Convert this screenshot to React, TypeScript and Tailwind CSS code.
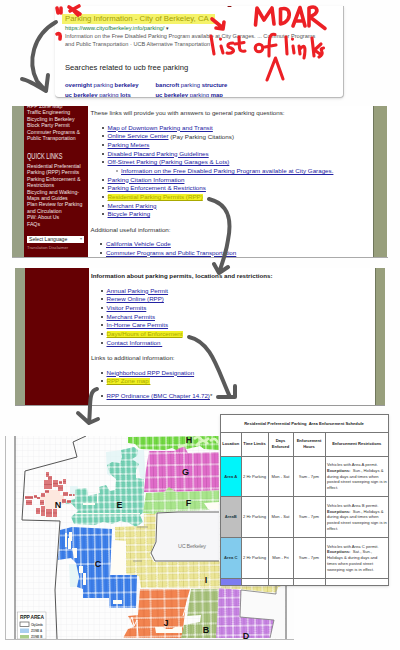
import React from "react";

const sans = "font-['Liberation_Sans',sans-serif]";

function Row({ children, hl = false, plain = "" }: { children: React.ReactNode; hl?: boolean; plain?: string }) {
  return (
    <li className="flex h-[8.7px] items-center whitespace-nowrap">
      <span className="mr-[4px] size-[2px] rounded-full bg-[#222]" />
      <span
        className={
          hl
            ? "bg-[#f0f024] leading-[6px] text-[#aaa900] underline decoration-[0.6px] underline-offset-[0.5px]"
            : "leading-[6px] text-[#2323a3] underline decoration-[0.6px] underline-offset-[0.5px]"
        }
      >
        {children}
      </span>
      {plain && <span className="whitespace-pre text-[#333]">{plain}</span>}
    </li>
  );
}

function SearchPanel() {
  return (
    <section className="ml-[55px] h-[92px] w-[289px] overflow-hidden rounded-b-sm border-b border-r border-[#bbb] bg-white pl-[10px] pt-[8px] shadow-sm">
      <div className="-ml-[3px] w-[153px] whitespace-nowrap bg-[#f5f36a] pl-[3px] text-[7.8px] leading-[10px] text-[#a4a006]">
        Parking Information - City of Berkeley, CA
      </div>
      <div className="mt-px h-[7px] whitespace-nowrap text-[5.8px] leading-[7px] text-[#187c43]">
        https://www.cityofberkeley.info/parking/ <span className="text-[5px] text-[#333]">▾</span>
      </div>
      <div className="whitespace-nowrap text-[5.6px] leading-[8px] text-[#555]">
        Information on the Free Disabled Parking Program available at City Garages. ... Commuter Programs
        <br />
        and Public Transportation · UCB Alternative Transportation
      </div>
      <h2 className="mt-[14px] text-[7.65px] leading-[11px] text-[#222]">Searches related to ucb free parking</h2>
      <div className="mt-[7px] grid grid-cols-[90.5px_1fr] whitespace-nowrap text-[5.92px] leading-[10.4px] text-[#222196]">
        <span><b>overnight</b> parking <b>berkeley</b></span>
        <span><b>bancroft</b> parking <b>structure</b></span>
        <span><b>uc berkeley</b> parking <b>lots</b></span>
        <span><b>uc berkeley</b> parking <b>map</b></span>
      </div>
    </section>
  );
}

function LinksPanel() {
  return (
    <section className="ml-[12px] mt-[8px] flex h-[152px] w-[376px] overflow-hidden border-b border-[#aaa] bg-white">
      <div className="w-[12px] bg-[#98a085]" />
      <aside className="w-[64px] overflow-hidden whitespace-nowrap bg-[#650003] pl-[3px] text-[5.2px] leading-[6.4px] text-[#f0e4e4]">
        <div className="-mt-[3px]">
          RPP Zone Map<br />Traffic Engineering<br />Bicycling in Berkeley<br />Block Party Permit<br />Commuter Programs &amp;<br />Public Transportation
        </div>
        <div className="mt-[10px] origin-left scale-x-[.66] text-[8.5px] leading-[10px]">QUICK LINKS</div>
        <div className="mt-[1.5px]">
          Residential Preferential<br />Parking (RPP) Permits<br />Parking Enforcement &amp;<br />Restrictions<br />Bicycling and Walking-<br />Maps and Guides<br />Plan Review for Parking<br />and Circulation<br />PW: About Us<br />FAQs
        </div>
        <div className="mt-[9px] flex h-[7px] w-[57px] items-center justify-between bg-white px-[2px] text-[5.1px] text-[#222]">
          <span>Select Language</span><span className="text-[4px] text-[#888]">▾</span>
        </div>
        <div className="mt-[2px] text-[4.2px] leading-[5px] text-[#c49a9a]">Translation Disclaimer</div>
      </aside>
      <main className="flex-1 pl-[2.5px] pt-[3px] text-[6.24px] text-[#333]">
        <p className="h-[9px] whitespace-nowrap text-[6.2px] leading-[8px]">These links will provide you with answers to general parking questions:</p>
        <ul className="ml-[11px] mt-[5.2px]">
          <Row>Map of Downtown Parking and Transit</Row>
          <Row plain=" (Pay Parking Citations)">Online Service Center</Row>
          <Row>Parking Meters</Row>
          <Row>Disabled Placard Parking Guidelines</Row>
          <Row>Off-Street Parking (Parking Garages &amp; Lots)</Row>
          <li className="ml-[14px] flex h-[8.7px] items-center whitespace-nowrap">
            <span className="mr-[3.5px] size-[2px] rounded-full border-[0.5px] border-[#777]" />
            <span className="text-[#2323a3] underline decoration-[0.6px] underline-offset-[0.5px]">Information on the Free Disabled Parking Program available at City Garages.</span>
          </li>
          <Row>Parking Citation Information</Row>
          <Row>Parking Enforcement &amp; Restrictions</Row>
          <Row hl>Residential Parking Permits (RPP)</Row>
          <Row>Merchant Parking</Row>
          <Row>Bicycle Parking</Row>
        </ul>
        <p className="mt-[6.8px] h-[9px] whitespace-nowrap leading-[8px]">Additional useful information:</p>
        <ul className="ml-[9.5px] mt-[5.2px]">
          <Row>California Vehicle Code</Row>
          <Row>Commuter Programs and Public Transportation</Row>
        </ul>
      </main>
      <div className="mr-[1px] w-[14px] border-l border-[#70775c] bg-[#989f7c]" />
    </section>
  );
}

function PermitsPanel() {
  return (
    <section className="ml-[15px] mt-[10px] flex h-[137.5px] w-[370px] overflow-hidden border-b border-[#999] bg-white">
      <div className="w-[9.5px] bg-[#98a085]" />
      <div className="w-[64px] bg-[#650003]" />
      <main className="flex-1 pl-[2.5px] pt-[4px] text-[6.2px] text-[#333]">
        <h3 className="h-[9px] whitespace-nowrap font-bold leading-[8px] text-[#222]">Information about parking permits, locations and restrictions:</h3>
        <ul className="ml-[9.5px] mt-[5.4px]">
          <Row>Annual Parking Permit</Row>
          <Row>Renew Online (RPP)</Row>
          <Row>Visitor Permits</Row>
          <Row>Merchant Permits</Row>
          <Row>In-Home Care Permits</Row>
          <Row hl>Days/Hours of Enforcement</Row>
          <Row>Contact Information&nbsp;</Row>
        </ul>
        <p className="mt-[6.8px] h-[9px] whitespace-nowrap leading-[8px]">Links to additional information:</p>
        <ul className="ml-[9.5px] mt-[5.2px]">
          <Row>Neighborhood RPP Designation</Row>
          <Row hl>RPP Zone map&nbsp;</Row>
          <li className="h-[6px]" />
          <Row plain="*">RPP Ordinance (BMC Chapter 14.72)</Row>
        </ul>
      </main>
      <div className="w-[10.5px] border-l border-[#70775c] bg-[#989f7c]" />
    </section>
  );
}

const zones = [
  { id: "e", c: "#7bd5ba", d: "#4bae8e", w: 5.6, h: 7, p: "75,489 87,488 88,496 100,493 99,487 106,485 110,491 115,490 116,479 110,474 107,465 112,462 120,463 122,457 121,450 134,447 138,450 137,456 132,459 139,464 136,470 136,478 144,479 144,512 140,515 143,522 136,527 129,523 120,521 112,524 103,522 95,525 74,524 71,517 78,511 72,504 65,504 67,501 75,499" },
  { id: "h", c: "#77dc47", d: "#4db526", w: 6.6, h: 14, p: "128,437 219,436 219,450 204,449 200,446 178,451 172,448 165,450 140,449 135,444 128,443" },
  { id: "g", c: "#e06bc9", d: "#b34a9d", w: 8.8, h: 12, p: "149,451 174,451 184,446 188,453 219,452 219,491 144,492 146,470" },
  { id: "f", c: "#a9e58c", d: "#78b85c", w: 12, h: 9.5, p: "146,493 164,492 169,487 176,492 219,490 219,504 208,510 158,512 155,514 143,513" },
  { id: "i", c: "#ece697", d: "#c1b857", w: 10.5, h: 7.2, p: "144,514 156,514 155,542 150,555 154,562 219,561 284,582 275,593 240,589 190,588 141,588 139,576 126,574 126,541 115,540 115,527 144,526" },
  { id: "c", c: "#3f82ec", d: "#205cc4", w: 7.1, h: 14.5, p: "60,530 72,527 112,529 110,575 137,575 136,608 109,608 109,598 83,598 83,589 77,587 79,577 76,563 71,558 58,560 59,546" },
  { id: "j", c: "#f28450", d: "#cb5a28", w: 14, h: 9.4, p: "140,589 190,589 186,603 182,638 123,638 128,629 134,627 128,616 138,615" },
  { id: "b", c: "#a9c37e", d: "#799548", w: 8, h: 11, p: "191,589 219,589 217,638 181,638 184,625 200,622 201,615 187,616" },
  { id: "d", c: "#ca88e5", d: "#9c52ba", w: 7.4, h: 9.4, p: "219,588 241,590 240,617 274,620 270,638 216,638" },
];

const redBlocks = [
  [46, 472, 3, 5], [48, 476, 4, 4], [44, 480, 8, 9], [53, 480, 5, 7], [59, 481, 3, 3], [63, 479, 3, 5], [58, 485, 5, 6],
  [25, 496, 8, 3], [26, 500, 6, 5], [34, 495, 3, 3], [37, 497, 3, 2], [41, 493, 4, 4], [45, 490, 4, 3], [40, 500, 4, 5],
  [36, 508, 4, 6], [41, 506, 4, 10], [46, 509, 6, 8], [53, 509, 4, 8], [63, 492, 5, 4], [69, 494, 3, 2], [62, 499, 4, 4], [67, 500, 4, 3], [73, 494, 1.5, 2],
];

function ZoneMap() {
  return (
    <svg className="block h-[204px] w-[289px]" viewBox="5 436 289 204" fontFamily="Liberation Sans, sans-serif">
      <defs>
        <pattern id="streets" width="5.5" height="6" patternUnits="userSpaceOnUse">
          <path d="M0 0H5.5M0 0V6" stroke="#ececef" strokeWidth=".7" fill="none" />
        </pattern>
        {zones.map((z) => (
          <pattern key={z.id} id={"zone-" + z.id} width={z.w} height={z.h} patternUnits="userSpaceOnUse" patternTransform="rotate(-1)">
            <rect width={z.w} height={z.h} fill="#fff" opacity=".85" />
            <rect x=".5" y=".5" width={z.w - 1} height={z.h - 1} fill={z.c} />
            <path d={`M${z.w / 2} .5V${z.h - 0.5}`} stroke={z.d} strokeWidth=".6" opacity=".7" />
            <rect x="1" y="1" width={z.w - 2} height={z.h - 2} fill="none" stroke={z.d} strokeWidth=".7" strokeDasharray="1 1" opacity=".6" />
          </pattern>
        ))}
      </defs>
      <rect x="5" y="436" width="289" height="204" fill="#fdfdfd" />
      <rect x="15" y="436" width="271" height="203" fill="url(#streets)" />
      <path d="M106 452l16-2 22 0 2 30-6-3-2-12-18-3-8 2-2 12-3-2zM69 564h9v23h-8zM70 486h8v10h-8z" fill="#ddf2f4" opacity=".7" />
      {zones.map((z) => <polygon key={z.id} points={z.p} fill={`url(#zone-${z.id})`} />)}
      <path d="M113 541h12v33h-14zM65 533h2v14h-2zM69 532h3v9h-1v8h-3v-11h1zM72 548h5v10h-3zM83 573h3v12h-3zM79 566h4v7h-4zM113 600h9v4h-9zM155 627h8l3 2h6l3-2h7v6h-26zM83 503h12v2H83zM75 513h65v1.3H75zM97 488h1v15h-1zM204 503l15-1v7h-11z" fill="#fffdf5" />
      <path d="M126 629l6-12 2 9 3-6 1 18M183 616l4-13" stroke="#fff" strokeWidth="1" fill="none" />
      <path d="M194 439q4-4 7 0t8-1M196 446q7-9 12-2M210 441q5-5 8 2M178 447l8-2" stroke="#d8f6be" strokeWidth="2.5" fill="none" />
      <path d="M46 490h14v5h4v9h-7v5H45v-9h-5v-5h6z" fill="#fde8df" />
      {redBlocks.map(([x, y, w, h], i) => (
        <g key={i}>
          <rect x={x} y={y} width={w} height={h} fill="#dc797c" />
          <path d={`M${x} ${y + h / 2}h${w}`} stroke="#b74b50" strokeWidth=".6" />
        </g>
      ))}
      <path d="M219 512L178 512 157 513 156 542 151 553 155 561H219Z" fill="#f6f6f8" />
      <path d="M219 512L178 512 157 513 156 542 151 553 155 561H219" fill="none" stroke="#666" strokeWidth="1" />
      <path d="M242 591L276 595 278 587H285V638H272L274 619 241 616Z" fill="#fafafa" />
      <path d="M241 590L276 594 276 583M241 590L240 617 274 620 270 638" fill="none" stroke="#777" strokeWidth=".8" />
      <path d="M86 436L73 442 77 457 25 471 22 520 60 521 55 590 57 639" fill="none" stroke="#555" strokeWidth="1" />
      <path d="M15 436V639M286 584V639" stroke="#555" strokeWidth="1" />
      <path d="M137 527H148M133 561H142" stroke="#888" strokeWidth=".7" />
      <text x="178" y="547.5" fontSize="5.5" fill="#777" textLength="28">UC Berkeley</text>
      <g fontSize="9" fontWeight="700" fill="#111" textAnchor="middle">
        <text x="189" y="442.5">H</text><text x="185.5" y="474.5">G</text><text x="188.5" y="506">F</text>
        <text x="119.5" y="508">E</text><text x="58" y="507.5">N</text><text x="98" y="567">C</text>
        <text x="206" y="583">I</text><text x="166" y="625.5">J</text><text x="206" y="632.5">B</text><text x="246" y="639">D</text>
      </g>
      <rect x="17.5" y="612" width="28.5" height="27" fill="#fff" stroke="#aaa" strokeWidth=".5" />
      <text x="20" y="619" fontSize="4.9" fontWeight="700" fill="#222" textLength="24">RPP AREA</text>
      <rect x="20" y="622" width="9" height="4.5" fill="#fff" stroke="#555" strokeWidth=".7" />
      <rect x="20" y="628.5" width="9" height="4.5" fill="#a9cff0" />
      <rect x="20" y="635" width="9" height="3.5" fill="#a9cd89" />
      <g fontSize="3" fill="#555" fontWeight="700"><text x="31" y="625.5" textLength="12">City Limits</text><text x="31" y="632">ZONE A</text><text x="31" y="638">ZONE B</text></g>
      <path d="M5.5 436V639M5 639.5H294" stroke="#bbb" strokeWidth="1" />
    </svg>
  );
}

const tableRows = [
  { n: "Area A", d: "Mon - Sat", bg: "bg-[#00f5fa]", l: ["Vehicles with Area A permit.", "Sun., Holidays &", "during days and times when", "posted street sweeping sign is in", "effect."] },
  { n: "AreaB", d: "Mon - Sat", bg: "bg-[#bfbfbf]", l: ["Vehicles with Area B permit.", "Sun., Holidays &", "during days and times when", "posted street sweeping sign is in", "effect."] },
  { n: "Area C", d: "Mon - Fri", bg: "bg-[#82cbed]", l: ["Vehicles with Area C permit.", "Sat., Sun.,", "Holidays & during days and", "times when posted street", "sweeping sign is in effect."] },
];
const cols = "grid grid-cols-[20.5px_27px_25px_32px_1fr] divide-x divide-[#777] border-t border-[#777]";
const cell = "flex items-center justify-center text-center whitespace-nowrap";

function Schedule() {
  return (
    <section className="absolute left-[220px] top-[414px] h-[171.5px] w-[169px] overflow-hidden border border-[#777] bg-white text-[4.15px] leading-[5.8px] text-[#333] shadow-sm">
      <h3 className="flex h-[17px] items-center justify-center whitespace-nowrap pr-px text-[4.15px] font-bold text-[#222]">Residential Preferential Parking&nbsp; Area Enforcement Schedule</h3>
      <div className={cols + " h-[23.5px] text-[4.05px] font-bold text-[#222]"}>
        <div className={cell}>Location</div><div className={cell}>Time Limits</div>
        <div className={cell}>Days<br />Enforced</div><div className={cell}>Enforcement<br />Hours</div><div className={cell}>Enforcement Restrictions</div>
      </div>
      {tableRows.map((r) => (
        <div key={r.n} className={cols + " h-[40.8px]"}>
          <div className={cell + " font-bold text-[#243c46] " + r.bg}>{r.n}</div>
          <div className={cell}>2 Hr Parking</div><div className={cell}>{r.d}</div><div className={cell}>9am - 7pm</div>
          <div className="flex flex-col justify-center whitespace-nowrap pl-[1.5px]">
            <div>{r.l[0]}</div><div><b>Exceptions:</b>&nbsp; {r.l[1]}</div><div>{r.l[2]}</div><div>{r.l[3]}</div><div>{r.l[4]}</div>
          </div>
        </div>
      ))}
      <div className={cols + " h-[7px]"}><div className="bg-[#7c7cf0]" /><div /><div /><div /><div /></div>
    </section>
  );
}

function Marks() {
  return (
    <svg className="pointer-events-none absolute left-0 top-0 h-[650px] w-[400px]" viewBox="0 0 400 650" fill="none" strokeLinecap="round" strokeLinejoin="round">
      <g stroke="#5a5a5a" strokeWidth="4">
        <path d="M56 22C33 35 27 62 37 81L46 91M22 79Q28 80 46 91L48 75" />
        <path d="M209 199C229 204 232 220 228 240C226 254 222 263 219 273M214 264L219 273L228 267" />
        <path d="M189 337C211 342 217 368 230 397M218 397H235V386" />
        <path d="M97 389C88 391 91 405 89 423M78 413L89 423L98 419" />
      </g>
      <g stroke="#ec2025" strokeWidth="3.6">
        <path d="M57 8L58 13M61 8L61 13M69 7L80 14M79 6L70 11M74 11L78 15" />
        <path d="M57 34Q61 32 60 39" />
        <path d="M212 19L223 28M224 22L223 29L216 28" />
        <path d="M255.500 25L257 8L264 20L272 8L274 24" />
        <path d="M280.500 9V24C287 23 291 17 288.500 11C287 8 284 8 280.500 9" />
        <path d="M293 26L300 7.500L305 26M295.500 21H303" />
        <path d="M309 26V8C316 5 319 10 315 14L310 17L325 28.500" />
      </g>
      <g stroke="#ec2025" strokeWidth="3.1">
        <path d="M211 36L214 54M221 46L223 53M220.500 39V39.100M233 43C226 43 227 47 231 48C237 51 231 54 227 53M239 37L239.500 48Q240 52 245 51M235 44L244 42.500" />
        <circle cx="259" cy="48" r="3.8" />
        <path d="M275 34.500C269 33 269 39 269 56M265 47L276 45" />
        <path d="M286 37L287 54M293 46L294 53M292.500 39V39.100M299 46L300 54M300 49C305 43 306 48 304 58M312 38L314 56M321 44L314.500 50L320 54M323.500 48C317 49 327 53 319 57" />
        <path d="M267 80L275.500 58L283 79" />
      </g>
      <path d="M228 6.500H231" stroke="#811" strokeWidth="1" />
    </svg>
  );
}

export default function App() {
  return (
    <div className={"relative h-[650px] w-[400px] overflow-hidden bg-[#fefefe] pt-[6px] " + sans}>
      <SearchPanel />
      <LinksPanel />
      <PermitsPanel />
      <div className="ml-[5px] mt-[30px]"><ZoneMap /></div>
      <Schedule />
      <Marks />
    </div>
  );
}
